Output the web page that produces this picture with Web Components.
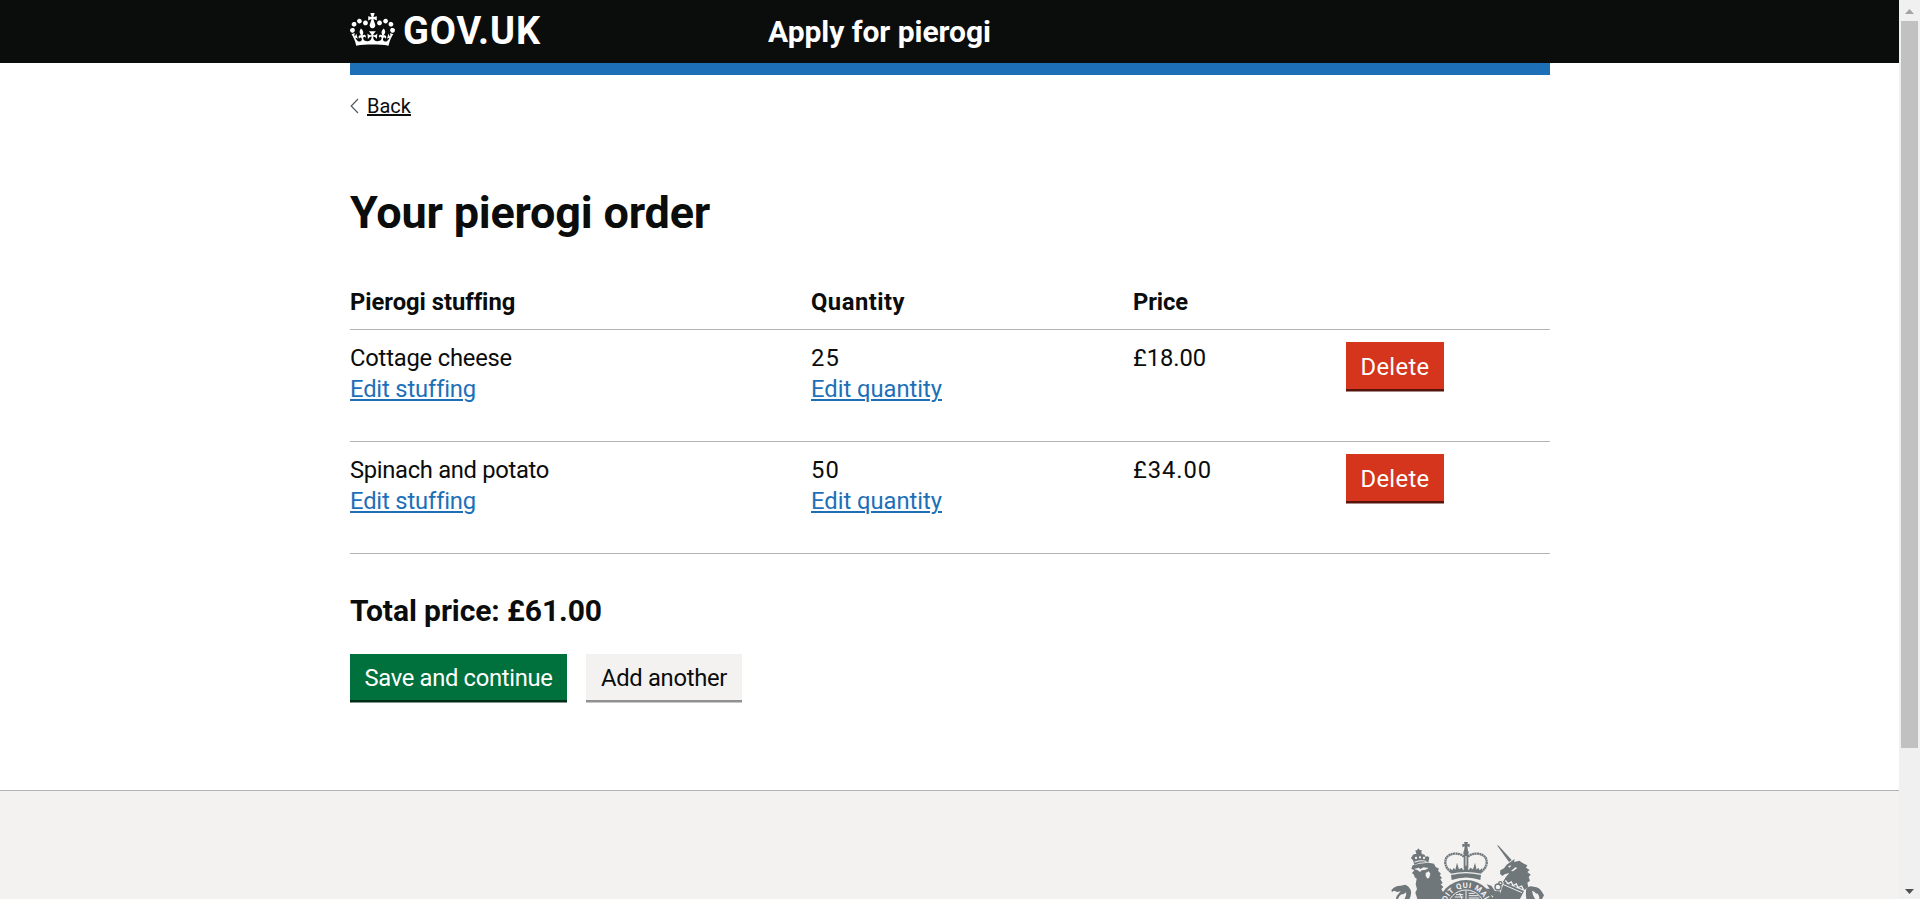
<!DOCTYPE html>
<html lang="en">
<head>
<meta charset="utf-8">
<title>Your pierogi order</title>
<style>
html, body { margin: 0; height: 899px; overflow: hidden; background: #fff; }
body { display: flex; font-family: Roboto, "Liberation Sans", sans-serif; color: #0b0c0c; }
</style>
</head>
<body>
<pierogi-page></pierogi-page>
<page-scrollbar></page-scrollbar>
<script>
const define = (name, html, extra) => customElements.define(name, class extends HTMLElement {
  constructor() {
    super();
    const t = document.createElement('template');
    t.innerHTML = html;
    this.attachShadow({ mode: 'open' }).append(t.content.cloneNode(true));
  }
  connectedCallback() { if (extra) extra.call(this); }
});

// One line of text, tracked so that it fills the given width.
define('fit-text', `<style>
  :host { display: inline-block; white-space: nowrap; }
  span { display: inline-block; }
  :host([link]) span { text-decoration: underline; text-decoration-thickness: var(--rule, 2px); text-underline-offset: var(--offset, 2px); }
  </style><span><slot></slot></span>`, function () {
  const span = this.shadowRoot.querySelector('span');
  const target = +this.getAttribute('width');
  requestAnimationFrame(() => {
    const n = this.textContent.length;
    const gap = (target - span.getBoundingClientRect().width) / n;
    span.style.letterSpacing = gap.toFixed(3) + 'px';
    this.style.width = target + 'px';
  });
});

define('gov-header', `<style>
  :host { display: block; background: #0b0c0c; height: 63px; }
  .in { width: 1200px; margin: 0 0 0 350px; height: 75px; display: grid; grid-template-columns: 418px 1fr; grid-template-rows: 63px; box-shadow: inset 0 -12px #1d70b8; color: #fff; font-weight: 700; }
  .logo { display: flex; align-items: flex-start; }
  svg { width: 45px; height: 33px; margin-top: 13px; fill: #fff; }
  .name { font-size: 38px; line-height: 44px; margin: 9px 0 0 8px; }
  .svc { font-size: 30px; line-height: 36px; padding-top: 14px; }
  </style>
  <div class="in"><div class="logo">
  <svg viewBox="0 0 132 97"><path fill-rule="evenodd" d="M25 30.2c3.5 1.5 7.7-.2 9.1-3.7 1.5-3.6-.2-7.8-3.9-9.2-3.6-1.4-7.6.3-9.1 3.9-1.4 3.5.3 7.5 3.9 9zM9 39.5c3.6 1.5 7.8-.2 9.2-3.7 1.5-3.6-.2-7.8-3.9-9.1-3.6-1.5-7.6.2-9.1 3.8-1.4 3.5.3 7.5 3.8 9zM4.4 57.2c3.5 1.5 7.7-.2 9.1-3.8 1.5-3.6-.2-7.7-3.9-9.1-3.5-1.5-7.6.3-9.1 3.8-1.4 3.5.3 7.6 3.9 9.1zm38.3-21.4c3.5 1.5 7.7-.2 9.1-3.8 1.5-3.6-.2-7.7-3.9-9.1-3.6-1.5-7.6.3-9.1 3.8-1.3 3.6.4 7.7 3.9 9.1zm64.4-5.6c-3.6 1.5-7.8-.2-9.1-3.7-1.5-3.6.2-7.8 3.8-9.2 3.6-1.4 7.7.3 9.2 3.9 1.3 3.5-.4 7.5-3.9 9zm15.9 9.3c-3.6 1.5-7.7-.2-9.1-3.7-1.5-3.6.2-7.8 3.7-9.1 3.6-1.5 7.7.2 9.2 3.8 1.5 3.5-.3 7.5-3.8 9zm4.7 17.7c-3.6 1.5-7.8-.2-9.2-3.8-1.5-3.6.2-7.7 3.9-9.1 3.6-1.5 7.7.3 9.2 3.8 1.3 3.5-.4 7.6-3.9 9.1zM89.3 35.8c-3.6 1.5-7.8-.2-9.2-3.8-1.4-3.6.2-7.7 3.9-9.1 3.6-1.5 7.7.3 9.2 3.8 1.4 3.6-.3 7.7-3.9 9.1zM69.7 17.7l8.9 4.7V9.3l-8.9 2.8c-.2-.3-.5-.6-.9-.9L72.4 0H59.6l3.5 11.2c-.3.3-.6.5-.9.9l-8.8-2.8v13.1l8.8-4.7c.3.3.6.7.9.9l-5 15.4v.1c-.2.8-.4 1.6-.4 2.4 0 4.1 3.1 7.5 7 8.1h.2c.3 0 .7.1 1 .1.4 0 .7 0 1-.1h.2c4-.6 7.1-4.1 7.1-8.1 0-.8-.1-1.7-.4-2.4V34l-5.1-15.4c.4-.2.7-.6 1-.9zM66 92.8c16.9 0 32.8 1.1 47.1 3.2 4-16.9 8.9-26.7 14-33.5l-9.6-3.4c1 4.9 1.1 7.2 0 10.2-1.5-1.4-3-4.3-4.2-8.7L108.6 76c2.8-2 5-3.2 7.5-3.3-4.4 9.4-10 11.9-13.6 11.2-4.3-.8-6.3-4.6-5.6-7.9 1-4.7 5.7-5.9 8-.5 4.3-8.7-3-11.4-7.6-8.8 7.1-7.2 7.9-13.5 2.1-21.1-8 6.1-8.1 12.3-4.5 20.8-4.7-5.4-12.1-2.5-9.5 6.2 3.4-5.2 7.9-2 7.2 3.1-.6 4.3-6.4 7.8-13.5 7.2-10.3-.9-10.9-8-11.2-13.8 2.5-.5 7.1 1.8 11 7.3L80.2 60c-4.1 4.4-8 5.3-12.3 5.4 1.4-4.4 8-11.6 8-11.6H55.5s6.4 7.2 7.9 11.6c-4.2-.1-8-1-12.3-5.4l1.4 16.4c3.9-5.5 8.5-7.7 10.9-7.3-.3 5.8-.9 12.8-11.1 13.8-7.2.6-12.9-2.9-13.5-7.2-.7-5 3.8-8.3 7.1-3.1 2.7-8.7-4.6-11.6-9.4-6.2 3.7-8.5 3.6-14.7-4.6-20.8-5.8 7.6-5 13.9 2.2 21.1-4.7-2.6-11.9.1-7.7 8.8 2.3-5.5 7.1-4.2 8.1.5.7 3.3-1.3 7.1-5.7 7.9-3.5.7-9-1.8-13.5-11.2 2.5.1 4.7 1.3 7.5 3.3l-4.7-15.4c-1.2 4.4-2.7 7.2-4.3 8.7-1.1-3-.9-5.3 0-10.2l-9.5 3.4c5 6.9 9.9 16.7 14 33.5 14.8-2.1 30.8-3.2 47.7-3.2z"/></svg>
  <fit-text class="name" width="138">GOV.UK</fit-text></div>
  <fit-text class="svc" width="223">Apply for pierogi</fit-text></div>`);

define('back-link', `<style>
  :host { display: flex; align-items: flex-start; height: 30px; font-size: 20px; line-height: 24px; padding-top: 31px; }
  svg { width: 9px; height: 16px; margin: 4px 8px 0 0; fill: none; stroke: #505a5f; stroke-width: 1.2; }
  fit-text { --rule: 2px; --offset: 1px; }
  </style><svg viewBox="0 0 9 16"><path d="M8 1 1.2 8 8 15"/></svg><fit-text link width="44"><slot></slot></fit-text>`);

define('gov-button', `<style>
  :host { display: inline-flex; justify-content: center; box-sizing: border-box; height: 46px; padding-top: 10px; font-size: 23.75px; line-height: 28px; background: #00703c; color: #fff; box-shadow: 0 2.5px 0 #002d18; }
  :host([kind=warning]) { background: #d4351c; box-shadow: 0 2.5px 0 #55150b; height: 47px; padding-top: 11px; }
  :host([kind=secondary]) { background: #f3f2f1; color: #0b0c0c; box-shadow: 0 2.5px 0 #929191; }
  </style><slot></slot>`);

define('order-row', `<style>
  :host { display: grid; grid-template-columns: 461px 322px 213px 1fr; box-sizing: border-box; height: 112px; padding-top: 12px; border-bottom: 1px solid #b1b4b6; font-size: 23.75px; line-height: 31.25px; }
  :host([head]) { height: 55px; font-weight: 700; }
  </style><slot></slot>`);

define('order-cell', `<style>
  :host { display: flex; flex-direction: column; align-items: flex-start; }
  :host([text]) { padding-top: 1px; }
  ::slotted([link]) { color: #1d70b8; }
  </style><slot></slot>`);

define('royal-crest', `<style>
  :host { display: block; width: 164px; height: 63px; }
  svg { display: block; width: 164px; height: 63px; overflow: hidden; }
  text { font: 700 23px Roboto, sans-serif; fill: #f3f2f1; }
  </style>
  <svg viewBox="0 0 492 189" fill="#6f777b">
  <!-- lion -->
  <path d="M80 88 76 98 85 103 78 111 84 116 86 124 92 128 89 145 93 159 88 170 94 189H160L172 170 166 159 172 153 164 145 170 141 163 130 168 126 161 118 165 113 156 104 159 98 149 93 144 83 128 80 100 83Z"/>
  <path d="M81 73 85 86Q105 77 127 79L130 66Q128 58 118 62 117 53 108 55L106 49 107 42H101L97 37 93 43H88L91 54Q80 52 78 62 71 64 81 73Z"/>
  <g fill="#f3f2f1"><path d="M84 99 98 95 104 99 112 94 128 96 119 101 107 103 102 108 94 102Z"/><path d="M119 111 128 106 133 113 130 124 125 128 119 120Z"/><circle cx="90" cy="66" r="3.4"/><circle cx="102" cy="64" r="3.4"/><circle cx="114" cy="66" r="3.4"/><path d="M85 77Q105 70 122 75V77Q105 73 86 80Z"/></g>
  <!-- tails -->
  <path d="M16 163Q24 149 44 149L58 146Q68 149 74 161 78 174 70 189H56Q63 178 60 169 54 176 46 175L40 181 36 189H30L32 180 44 166 34 168 24 164 18 168Z"/>
  <path d="M420 162Q425 148 443 152 461 153 468 168L474 178 468 189H460Q460 178 454 172 450 175 446 168L438 164 441 177 447 189H421Q419 176 420 162Z"/>
  <!-- crown -->
  <path d="M234 18H246L244 25 251 23V34L244 31 246 46H234L236 31 229 34V23L236 25Z"/>
  <circle cx="240" cy="50" r="8"/>
  <g fill="none" stroke="#6f777b" stroke-width="7" stroke-dasharray="6 1.2"><path d="M234 62Q224 52 205 53 176 57 178 82 180 97 196 109"/><path d="M246 62Q256 52 275 53 304 57 302 82 300 97 284 109"/></g>
  <path d="M233 56H247V98H233Z"/><path d="M238.500 60H241.500V98H238.500Z" fill="#f3f2f1"/>
  <path d="M194 113 191 96 199 103 203 95 208 101 213 80 219 100 227 95 232 103 240 86 248 103 253 95 261 100 267 80 272 101 277 95 281 103 289 96 286 113Q240 103 194 113Z"/>
  <path d="M195 117Q240 107 285 117L283 132Q240 117 197 132Z"/>
  <!-- garter -->
  <circle cx="240" cy="218" r="86"/>
  <path id="arc" d="M178 218A62 62 0 0 1 302 218" fill="none"/>
  <circle cx="240" cy="218" r="56" fill="none" stroke="#f3f2f1" stroke-width="3"/>
  <g fill="none" stroke="#f3f2f1" stroke-width="3"><path d="M240 164V189M210 176H232M206 183H232M248 172H266M248 179H276M248 186H280"/><path d="M221 171 228 189"/></g>
  <text><textPath href="#arc" startOffset="50%" text-anchor="middle" textLength="152">DIT QUI MAL</textPath></text>
  <!-- unicorn -->
  <path d="M333 28 338 29 377 72 369 78Z"/>
  <path d="M374 77 386 69 384 78 400 74 410 81 424 88 420 95 431 102 424 108 434 116 428 123 432 134 424 140 427 154 416 161 350 139 359 124 370 111 356 115 349 120 342 113 343 103 354 97 362 86Z"/>
  <path d="M354 139 414 165 402 189H340L345 165Z"/>
  <path d="M358 133 366 143 376 138 381 149 391 144 396 155 407 150 412 160" fill="none" stroke="#f3f2f1" stroke-width="4"/>
  <path d="M348 144 408 170" fill="none" stroke="#f3f2f1" stroke-width="3"/>
  <path d="M366 91 376 88 371 95ZM375 105 388 94 394 96 381 106Z" fill="#f3f2f1"/>
  <g fill="none" stroke="#6f777b" stroke-width="4"><circle cx="336" cy="153" r="9"/><circle cx="343" cy="142" r="5"/></g>
  <path d="M302 145 316 149 327 165 342 166 350 189H316L322 181 310 175 302 178 308 167 301 158 311 158Z"/>
  </svg>`);

define('gov-footer', `<style>
  :host { display: block; box-sizing: border-box; height: 109px; border-top: 1px solid #b1b4b6; background: #f3f2f1; }
  div { width: 1200px; margin: 0 0 0 350px; padding-top: 45px; display: flex; justify-content: flex-end; }
  </style><div><royal-crest></royal-crest></div>`);

define('pierogi-page', `<style>
  :host { display: flex; flex-direction: column; width: 1899px; height: 899px; overflow: hidden; }
  main { width: 1200px; height: 727px; margin: 0 0 0 350px; }
  h1 { margin: 63px 0 0; font-size: 45px; line-height: 52px; height: 88px; }
  h2 { margin: 39px 0 0; font-size: 30px; line-height: 36px; height: 61px; }
  .btns { display: flex; gap: 19px; }
  </style>
  <gov-header></gov-header>
  <main>
    <back-link>Back</back-link>
    <h1><fit-text width="360">Your pierogi order</fit-text></h1>
    <order-row head><order-cell><fit-text width="164">Pierogi stuffing</fit-text></order-cell><order-cell><fit-text width="94">Quantity</fit-text></order-cell><order-cell><fit-text width="55">Price</fit-text></order-cell></order-row>
    <order-row>
      <order-cell text><fit-text width="162">Cottage cheese</fit-text><fit-text link width="124">Edit stuffing</fit-text></order-cell>
      <order-cell text><fit-text width="29">25</fit-text><fit-text link width="131">Edit quantity</fit-text></order-cell>
      <order-cell text><fit-text width="73">£18.00</fit-text></order-cell>
      <order-cell><gov-button kind="warning" style="width:98px"><fit-text width="69">Delete</fit-text></gov-button></order-cell>
    </order-row>
    <order-row>
      <order-cell text><fit-text width="199">Spinach and potato</fit-text><fit-text link width="124">Edit stuffing</fit-text></order-cell>
      <order-cell text><fit-text width="29">50</fit-text><fit-text link width="131">Edit quantity</fit-text></order-cell>
      <order-cell text><fit-text width="79">£34.00</fit-text></order-cell>
      <order-cell><gov-button kind="warning" style="width:98px"><fit-text width="69">Delete</fit-text></gov-button></order-cell>
    </order-row>
    <h2><fit-text width="252">Total price: £61.00</fit-text></h2>
    <div class="btns">
      <gov-button style="width:217px"><fit-text width="188">Save and continue</fit-text></gov-button>
      <gov-button kind="secondary" style="width:156px"><fit-text width="126">Add another</fit-text></gov-button>
    </div>
  </main>
  <gov-footer></gov-footer>`);

define('page-scrollbar', `<style>
  :host { display: flex; flex-direction: column; align-items: center; width: 21px; height: 899px; background: #f0f0f0; }
  svg { width: 21px; height: 21px; flex: none; }
  .thumb { width: 17px; height: 727px; background: #c1c1c1; }
  .space { flex: 1; }
  </style><svg viewBox="0 0 21 21"><path d="M6 14 10.5 9 15 14Z" fill="#a3a3a3"/></svg><div class="thumb"></div><div class="space"></div><svg viewBox="0 0 21 21"><path d="M6 11H15L10.500 16Z" fill="#505050"/></svg>`);
</script>
</body>
</html>
